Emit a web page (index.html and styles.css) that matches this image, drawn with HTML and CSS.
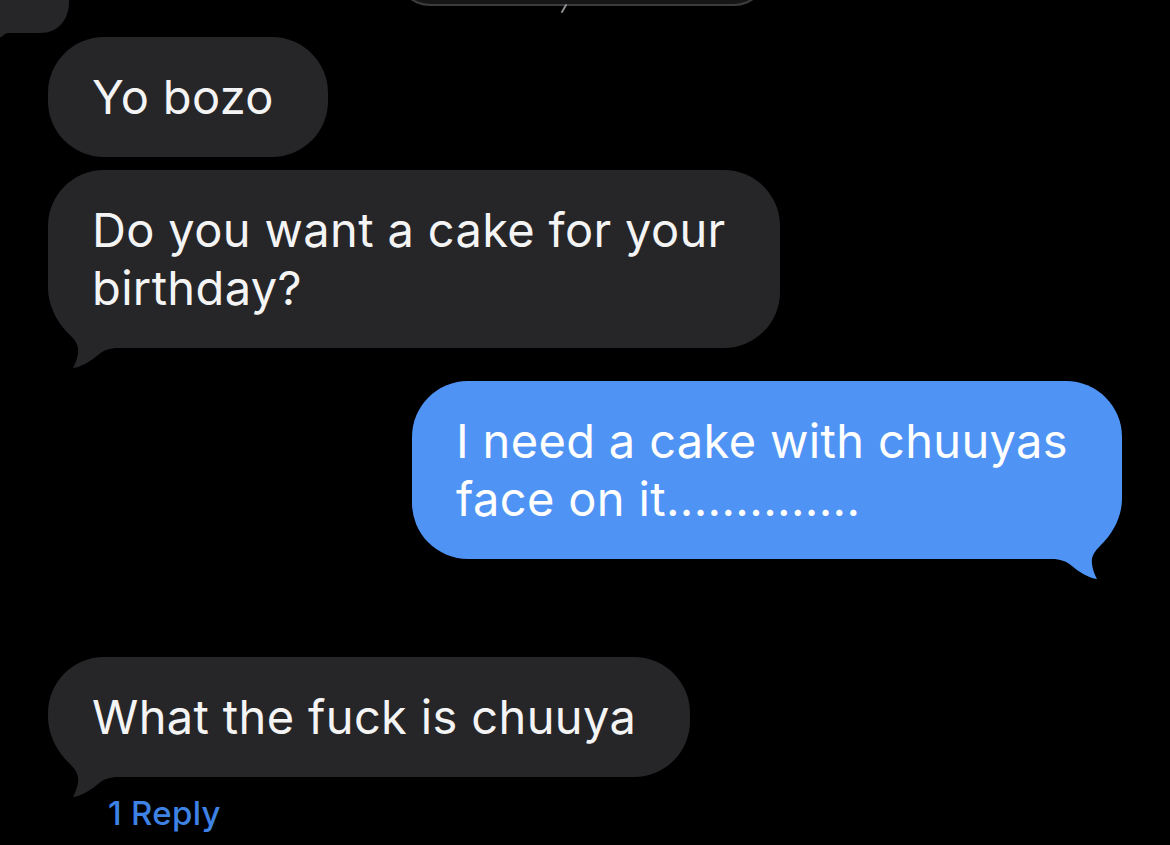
FILE: index.html
```html
<!DOCTYPE html>
<html lang="en">
<head>
<meta charset="utf-8">
<title>Messages</title>
<link rel="stylesheet" href="styles.css">
</head>
<body>
<div class="screen">
  <div class="top-row">
    <svg class="prev-bubble" width="70" height="42" viewBox="0 0 70 42">
      <path d="M0,0 L69,0 L69,2 C69,20 58,33 40,33 L9,33 C5,33 2,36 0,40 Z" fill="#262629"/>
    </svg>
    <div class="preview-bubble">
      <svg class="preview-mark" width="8" height="10" viewBox="0 0 8 10">
        <path d="M6,1 L2,8" stroke="#8a8a8e" stroke-width="2" stroke-linecap="round"/>
      </svg>
    </div>
  </div>

  <div class="thread">
    <div class="bubble in">
      <span class="text">Yo bozo</span>
    </div>

    <div class="bubble in tailed gap-s">
      <svg class="tail tail-left" width="70" height="82" viewBox="0 0 70 82">
        <rect x="0" y="0" width="70" height="60" fill="#000"/>
        <path d="M0,0 C0,16 8,34 22,47 C28,53 31,58 30,65 C29,72 27,76 25,80 C33,79 43,73 50,67 C56,62 62,60 70,60 L70,0 Z" fill="#262629"/>
      </svg>
      <span class="text">Do you want a cake for your<br>birthday?</span>
    </div>

    <div class="bubble out tailed gap-m">
      <svg class="tail tail-right" width="70" height="82" viewBox="0 0 70 82">
        <rect x="0" y="0" width="70" height="60" fill="#000"/>
        <path d="M0,0 C0,16 8,34 22,47 C28,53 31,58 30,65 C29,72 27,76 25,80 C33,79 43,73 50,67 C56,62 62,60 70,60 L70,0 Z" fill="#4f94f5"/>
      </svg>
      <span class="text">I need a cake with chuuyas<br>face on it..............</span>
    </div>

    <div class="bubble in tailed gap-l">
      <svg class="tail tail-left" width="70" height="82" viewBox="0 0 70 82">
        <rect x="0" y="0" width="70" height="60" fill="#000"/>
        <path d="M0,0 C0,16 8,34 22,47 C28,53 31,58 30,65 C29,72 27,76 25,80 C33,79 43,73 50,67 C56,62 62,60 70,60 L70,0 Z" fill="#262629"/>
      </svg>
      <span class="text">What the fuck is chuuya</span>
    </div>

    <div class="reply-link">1 Reply</div>
  </div>
</div>
</body>
</html>
```

FILE: styles.css
```css
html, body {
  margin: 0;
  padding: 0;
  background: #000;
}

body {
  width: 1170px;
  height: 845px;
  overflow: hidden;
  font-family: "Inter", "Noto Sans", "Liberation Sans", sans-serif;
  -webkit-font-smoothing: antialiased;
}

.screen {
  display: flex;
  flex-direction: column;
  width: 1170px;
  height: 845px;
}

.top-row {
  display: flex;
  align-items: flex-start;
  height: 37px;
  overflow: hidden;
}

.prev-bubble {
  display: block;
  flex: none;
}

.preview-bubble {
  position: relative;
  flex: none;
  width: 372px;
  height: 60px;
  margin-top: -54px;
  margin-left: 326px;
  box-sizing: border-box;
  background: #161617;
  border: 2px solid #3c3c3f;
  border-top: none;
  border-radius: 0 0 34px 34px;
}

.preview-mark {
  position: absolute;
  left: 162px;
  top: 58px;
}

.thread {
  display: flex;
  flex-direction: column;
  align-items: flex-start;
  padding: 0 48px;
}

.bubble {
  position: relative;
  box-sizing: border-box;
  padding: 31px 54px 31px 44px;
  border-radius: 56px;
  font-size: 47px;
  line-height: 58px;
  font-weight: 400;
  letter-spacing: 0.35px;
  white-space: nowrap;
  color: #f4f4f5;
}

.bubble .text {
  position: relative;
  display: block;
}

.bubble.in {
  background: #262629;
}

.bubble.out {
  align-self: flex-end;
  background: #4f94f5;
  color: #ffffff;
}

.bubble.in.tailed {
  border-bottom-left-radius: 0;
}

.bubble.out.tailed {
  border-bottom-right-radius: 0;
}

.tail {
  position: absolute;
  bottom: -22px;
  display: block;
}

.tail-left {
  left: 0;
}

.tail-right {
  right: 0;
  transform: scaleX(-1);
}

.gap-s {
  margin-top: 13px;
}

.gap-m {
  margin-top: 33px;
}

.gap-l {
  margin-top: 98px;
}

.reply-link {
  margin-top: 16px;
  margin-left: 60px;
  font-size: 33px;
  line-height: 40px;
  font-weight: 500;
  letter-spacing: 0.3px;
  color: #3d82e4;
}
```
